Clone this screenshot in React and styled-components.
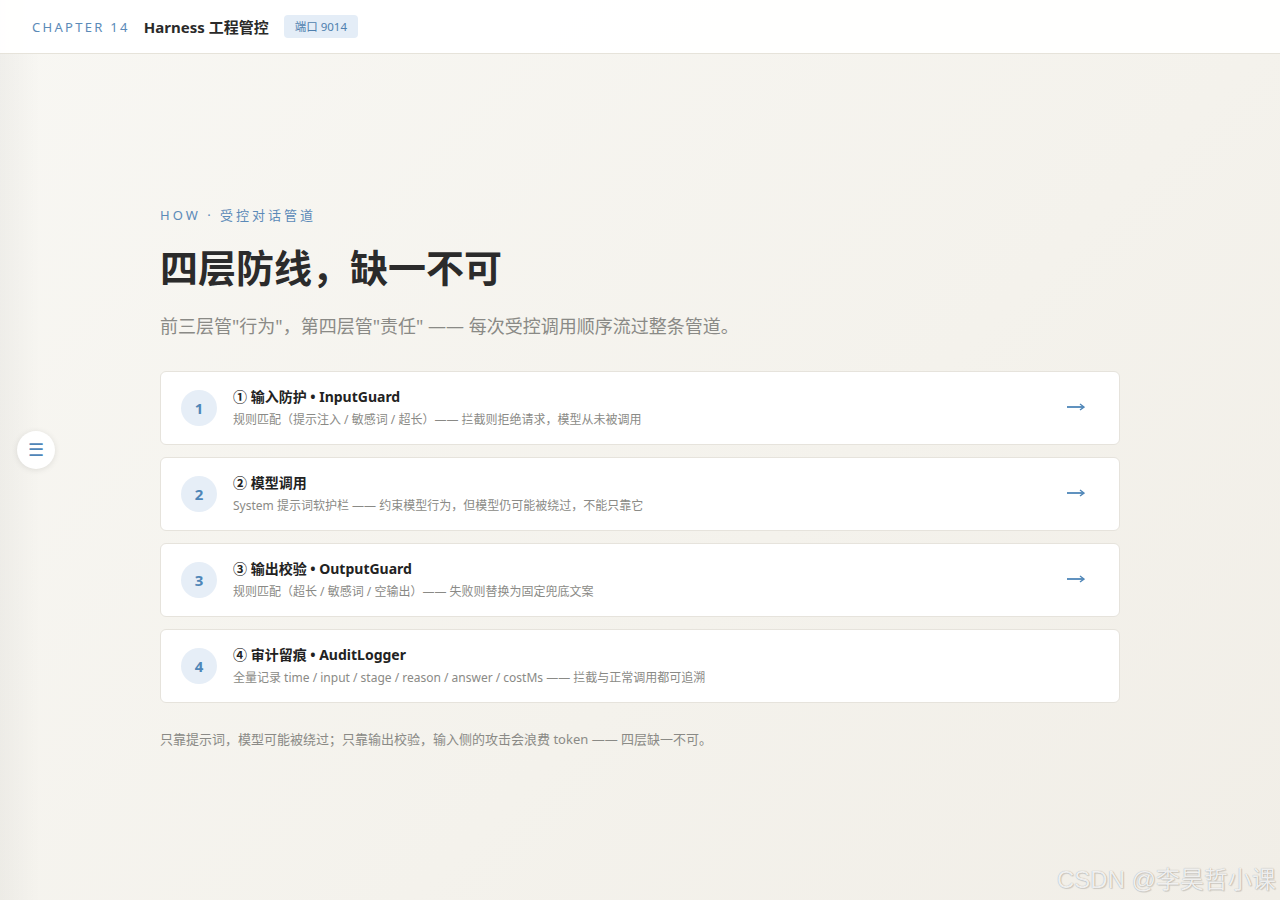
import React from 'react'
import styled, { createGlobalStyle } from 'styled-components'

const GlobalStyle = createGlobalStyle`
  html, body {
    margin: 0;
    padding: 0;
  }
  body {
    font-family: "Noto Sans", "Noto Sans CJK SC", sans-serif;
    background: #f5f3ee;
    color: #2b2b2b;
  }
`

const layers = [
  { no: 1, title: '① 输入防护 • InputGuard', desc: '规则匹配（提示注入 / 敏感词 / 超长）—— 拦截则拒绝请求，模型从未被调用', arrow: true },
  { no: 2, title: '② 模型调用', desc: 'System 提示词软护栏 —— 约束模型行为，但模型仍可能被绕过，不能只靠它', arrow: true },
  { no: 3, title: '③ 输出校验 • OutputGuard', desc: '规则匹配（超长 / 敏感词 / 空输出）—— 失败则替换为固定兜底文案', arrow: true },
  { no: 4, title: '④ 审计留痕 • AuditLogger', desc: '全量记录 time / input / stage / reason / answer / costMs —— 拦截与正常调用都可追溯', arrow: false },
]

function App() {
  return (
    <>
      <GlobalStyle />
      <Page>
        <Header>
          <Chapter>CHAPTER 14</Chapter>
          <HeaderTitle>Harness 工程管控</HeaderTitle>
          <Badge>端口 9014</Badge>
        </Header>
        <Main>
          <Content>
            <Eyebrow>HOW · 受控对话管道</Eyebrow>
            <Title>四层防线，缺一不可</Title>
            <Lead>前三层管"行为"，第四层管"责任" —— 每次受控调用顺序流过整条管道。</Lead>
            <List>
              {layers.map((l) => (
                <Card key={l.no}>
                  <Num>{l.no}</Num>
                  <CardBody>
                    <CardTitle>{l.title}</CardTitle>
                    <CardDesc>{l.desc}</CardDesc>
                  </CardBody>
                  {l.arrow && (
                    <Arrow viewBox="0 0 18 8" aria-hidden>
                      <path d="M0 4 H16" stroke="currentColor" strokeWidth="1.8" />
                      <path d="M13 1 L17 4 L13 7" fill="none" stroke="currentColor" strokeWidth="1.4" />
                    </Arrow>
                  )}
                </Card>
              ))}
            </List>
            <Note>只靠提示词，模型可能被绕过；只靠输出校验，输入侧的攻击会浪费 token —— 四层缺一不可。</Note>
          </Content>
        </Main>
        <MenuButton>☰</MenuButton>
        <Watermark>CSDN @李昊哲小课</Watermark>
      </Page>
    </>
  )
}

const Page = styled.div`
  position: relative;
  min-height: 900px;
  display: flex;
  flex-direction: column;
  background: linear-gradient(90deg, rgba(0,0,0,0.035) 0, rgba(0,0,0,0) 40px),
    linear-gradient(135deg, #f8f7f3 0%, #f4f2ec 60%, #f1eee7 100%);
  overflow: hidden;
`

const Header = styled.header`
  height: 53px;
  display: flex;
  align-items: center;
  padding: 0 32px;
  background: rgba(255, 255, 255, 0.94);
  border-bottom: 1px solid #e6e3da;
`

const Chapter = styled.span`
  font-size: 13px;
  letter-spacing: 2.3px;
  color: #5b8ab8;
`

const HeaderTitle = styled.span`
  margin-left: 14px;
  font-size: 15px;
  font-weight: 700;
  color: #2a2a2a;
`

const Badge = styled.span`
  margin-left: 15px;
  padding: 4px 11px;
  font-size: 11.5px;
  line-height: 15px;
  color: #4f7fae;
  background: #e4edf7;
  border-radius: 4px;
`

const Main = styled.main`
  flex: 1;
  display: flex;
  justify-content: center;
  padding-top: 152px;
`

const Content = styled.div`
  width: 960px;
`

const Eyebrow = styled.div`
  font-size: 13px;
  letter-spacing: 3px;
  color: #5b8ab8;
  line-height: 18px;
`

const Title = styled.h1`
  margin: 17px 0 0;
  font-size: 38px;
  font-weight: 700;
  line-height: 52px;
  color: #2b2b2b;
`

const Lead = styled.p`
  margin: 20px 0 0;
  font-size: 18px;
  line-height: 26px;
  color: #8a8a86;
`

const List = styled.div`
  margin-top: 32px;
  display: flex;
  flex-direction: column;
  gap: 12px;
`

const Card = styled.div`
  height: 74px;
  box-sizing: border-box;
  display: flex;
  align-items: center;
  padding: 0 34px 0 20px;
  background: #fff;
  border: 1px solid #e6e3dc;
  border-radius: 6px;
`

const Num = styled.div`
  width: 36px;
  height: 36px;
  border-radius: 50%;
  background: #e6eef7;
  color: #4f86b8;
  font-weight: 700;
  font-size: 15px;
  display: flex;
  align-items: center;
  justify-content: center;
  flex-shrink: 0;
`

const CardBody = styled.div`
  flex: 1;
  margin-left: 16px;
`

const CardTitle = styled.div`
  font-size: 14px;
  font-weight: 700;
  color: #222;
  line-height: 20px;
  margin-top: -1px;
`

const CardDesc = styled.div`
  margin-top: 4px;
  font-size: 12px;
  color: #8a8a86;
  line-height: 18px;
`

const Arrow = styled.svg`
  width: 18px;
  height: 8px;
  color: #4f86b8;
  margin-top: -3px;
`

const Note = styled.p`
  margin: 26px 0 0;
  font-size: 13px;
  color: #8a8a86;
`

const MenuButton = styled.button`
  position: absolute;
  left: 17px;
  top: 431px;
  width: 38px;
  height: 38px;
  border-radius: 50%;
  border: none;
  background: #fff;
  box-shadow: 0 1px 6px rgba(0, 0, 0, 0.1);
  color: #4f86b8;
  font-size: 18px;
  display: flex;
  align-items: center;
  justify-content: center;
  padding: 0;
`

const Watermark = styled.div`
  position: absolute;
  right: 4px;
  bottom: 5px;
  font-size: 24px;
  color: rgba(255, 255, 255, 0.85);
  text-shadow: 0 0 1px rgba(0, 0, 0, 0.35), 1px 1px 1px rgba(0, 0, 0, 0.12);
  font-family: "Liberation Sans", "Noto Sans CJK SC", sans-serif;
`

export default App
